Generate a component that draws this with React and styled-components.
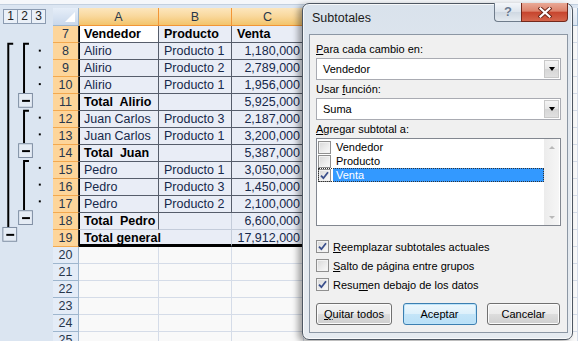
import React from 'react'
import styled, { createGlobalStyle } from 'styled-components'

const GlobalStyle = createGlobalStyle`
  html, body {
    margin: 0;
    padding: 0;
    background: #f9f9f9;
    overflow: hidden;
  }
  body {
    font-family: 'Liberation Sans', Arial, sans-serif;
  }
`

const Screen = styled.div`
  position: relative;
  width: 578px;
  height: 341px;
  overflow: hidden;
  display: flex;
  flex-direction: column;
  background: #dce6f2;
`

const TopStrip = styled.div`
  height: 4px;
  flex: none;
  background: #f5f7fa;
  border-bottom: 1px solid #c3d0df;
`

const Body = styled.div`
  flex: 1;
  display: flex;
  min-height: 0;
`

const OutlinePane = styled.div`
  width: 53px;
  flex: none;
  display: flex;
  flex-direction: column;
  background: #dbe5f1;
`

const LevelBar = styled.div`
  height: 21px;
  box-sizing: border-box;
  padding: 4px 0 0 3px;
  display: flex;
`

const LevelButton = styled.div`
  width: 15px;
  height: 15px;
  box-sizing: border-box;
  border: 1px solid #8b9bb1;
  margin-right: -1px;
  background: #eaf0f8;
  font-size: 12px;
  line-height: 13px;
  text-align: center;
  color: #222;
`

const Sheet = styled.div`
  flex: 1;
  min-width: 0;
  padding-top: 3px;
  background: #dce6f2;
`

const Grid = styled.div`
  display: grid;
  grid-template-columns: 26px 80px 73px 72px 1fr;
  grid-template-rows: 18px;
  grid-auto-rows: 17px;
  font-size: 12.5px;
`

const Corner = styled.div`
  position: relative;
  box-sizing: border-box;
  background: linear-gradient(180deg, #e6eef8, #c9d8ec);
  border-right: 1px solid #9eb6ce;
  border-bottom: 1px solid #9eb6ce;
  &::after {
    content: '';
    position: absolute;
    right: 3px;
    bottom: 3px;
    border-style: solid;
    border-width: 0 0 10px 10px;
    border-color: transparent transparent #ffffff transparent;
  }
`

const ColHead = styled.div`
  box-sizing: border-box;
  text-align: center;
  line-height: 18px;
  color: #27364a;
  background: ${p =>
    p.$selected
      ? 'linear-gradient(180deg, #fce6bd 0%, #f9d99f 45%, #f3c46b 100%)'
      : 'linear-gradient(180deg, #f3f6fb, #dde7f3)'};
  border-right: 1px solid ${p => (p.$selected ? '#f29536' : '#9eb6ce')};
  border-bottom: 1px solid ${p => (p.$selected ? '#f29536' : '#9eb6ce')};
`

const RowHead = styled.div`
  box-sizing: border-box;
  text-align: center;
  line-height: 16px;
  color: #27364a;
  background: ${p => (p.$selected ? '#fdd59a' : '#e4ecf7')};
  border-bottom: 1px solid ${p => (p.$selected ? '#f3a94f' : '#9eb6ce')};
  border-right: 1px solid ${p => (p.$selected ? '#2b2b2b' : '#9eb6ce')};
`

const Cell = styled.div`
  box-sizing: border-box;
  padding: 0 3px 0 5px;
  line-height: 16px;
  white-space: pre;
  overflow: hidden;
  grid-column: ${p => (p.$span ? `span ${p.$span}` : 'auto')};
  text-align: ${p => (p.$num ? 'right' : 'left')};
  font-weight: ${p => (p.$bold ? 700 : 400)};
  color: ${p => (p.$bold ? '#000' : '#16284a')};
  background: ${p => (p.$active ? '#ffffff' : p.$empty ? '#f9f9f9' : '#e9edf6')};
  border-right: 1px solid ${p => (p.$empty ? '#d5dce8' : p.$soft ? '#c4ccda' : '#565d6b')};
  border-bottom: ${p => (p.$thick ? '3px solid #000' : `1px solid ${p.$empty ? '#d5dce8' : p.$softBottom ? '#c4ccda' : '#565d6b'}`)};
  box-shadow: ${p => (p.$edge ? 'inset 1px 0 0 #000' : 'none')};
`

/* ---------- dialog ---------- */

const Dialog = styled.div`
  position: absolute;
  left: 302px;
  top: 3px;
  width: 271px;
  height: 337px;
  box-sizing: border-box;
  border: 1px solid #4e5762;
  border-radius: 7px;
  background: linear-gradient(180deg, #d9e2ec 0%, #e2e8ef 35%, #e6ebf0 100%);
  box-shadow: -4px 2px 6px rgba(0, 0, 0, 0.35), inset 0 0 0 1px rgba(255, 255, 255, 0.75);
  display: flex;
  flex-direction: column;
  font-size: 11px;
  color: #000;
`

const TitleBar = styled.div`
  height: 29px;
  flex: none;
  display: flex;
  justify-content: space-between;
  align-items: flex-start;
`

const Title = styled.div`
  padding: 7px 0 0 9px;
  font-size: 12.5px;
  color: #1b1b1b;
`

const Caption = styled.div`
  display: flex;
  margin: -1px 4px 0 0;
`

const HelpButton = styled.div`
  width: 27px;
  height: 19px;
  box-sizing: border-box;
  border: 1px solid #6f7c8b;
  border-top: none;
  border-right: none;
  border-radius: 0 0 0 4px;
  background: linear-gradient(180deg, #f3f6fa 0%, #dde4ec 50%, #cfd8e2 51%, #e4eaf0 100%);
  text-align: center;
  font-weight: 700;
  font-size: 13px;
  line-height: 18px;
  color: #687990;
  text-shadow: 0 0 1px #fff;
`

const CloseButton = styled.div`
  width: 47px;
  height: 19px;
  box-sizing: border-box;
  border: 1px solid #73291c;
  border-top: none;
  border-radius: 0 0 4px 0;
  background: linear-gradient(180deg, #e9a996 0%, #dd836c 45%, #c7452e 52%, #d4664c 100%);
  display: flex;
  align-items: center;
  justify-content: center;
`

const Client = styled.div`
  flex: 1;
  margin: 1px 4px 6px 6px;
  box-sizing: border-box;
  background: #f0f0f0;
  border: 1px solid #8c97a4;
  padding: 7px 6px 0 6px;
  display: flex;
  flex-direction: column;
`

const Label = styled.div`
  height: 14px;
  line-height: 14px;
  margin-top: ${p => p.$gap || 0}px;
`

const Select = styled.div`
  height: 22px;
  box-sizing: border-box;
  margin-top: 2px;
  border: 1px solid #a9abb2;
  background: #fff;
  display: flex;
  align-items: stretch;
  padding: 1px;
`

const SelectValue = styled.div`
  flex: 1;
  padding-left: 5px;
  line-height: 18px;
`

const SelectArrow = styled.div`
  width: 15px;
  box-sizing: border-box;
  border: 1px solid #c9c9c9;
  background: linear-gradient(180deg, #f4f4f4 0%, #e6e6e6 50%, #d6d6d6 51%, #e0e0e0 100%);
  display: flex;
  align-items: center;
  justify-content: center;
  &::after {
    content: '';
    border-style: solid;
    border-width: 4px 3.5px 0 3.5px;
    border-color: #000 transparent transparent transparent;
  }
`

const ListBox = styled.div`
  height: 88px;
  box-sizing: border-box;
  margin-top: 2px;
  border: 1px solid #828790;
  background: #fff;
  display: flex;
`

const ListItems = styled.div`
  flex: 1;
  padding: 1px 0 0 1px;
`

const ListItem = styled.div`
  height: 14px;
  display: flex;
  align-items: center;
  outline: ${p => (p.$focus ? '1px dotted #333' : 'none')};
  outline-offset: -1px;
`

const ItemText = styled.div`
  flex: 1;
  height: 14px;
  line-height: 14px;
  margin-left: 2px;
  padding-left: 3px;
  background: ${p => (p.$selected ? '#3399ff' : 'transparent')};
  color: ${p => (p.$selected ? '#fff' : '#000')};
`

const ScrollBar = styled.div`
  width: 15px;
  flex: none;
  margin-right: 1px;
  background: linear-gradient(90deg, #ececec, #f6f6f6);
  display: flex;
  flex-direction: column;
  justify-content: space-between;
  align-items: center;
  padding: 7px 0 6px;
  box-sizing: border-box;
`

const ScrollArrow = styled.div`
  border-style: solid;
  border-width: ${p => (p.$down ? '3px 3.5px 0 3.5px' : '0 3.5px 3px 3.5px')};
  border-color: ${p =>
    p.$down ? '#b9b9b9 transparent transparent transparent' : 'transparent transparent #b9b9b9 transparent'};
`

const Box = styled.span`
  width: 13px;
  height: 13px;
  flex: none;
  box-sizing: border-box;
  border: 1px solid #8f8f8f;
  background: linear-gradient(135deg, #d8d8d8, #fbfbfb);
  box-shadow: inset 0 0 0 1px #f2f2f2;
  display: inline-flex;
  align-items: center;
  justify-content: center;
`

const Options = styled.div`
  margin-top: 11px;
  display: flex;
  flex-direction: column;
`

const Option = styled.div`
  height: 19px;
  display: flex;
  align-items: center;
  gap: 4px;
`

const ButtonRow = styled.div`
  margin-top: 9px;
  padding-right: 1px;
  display: flex;
  justify-content: space-between;
`

const Button = styled.div`
  height: 22px;
  width: ${p => p.$w}px;
  box-sizing: border-box;
  border: 1px solid ${p => (p.$primary ? '#3c7fb1' : '#707070')};
  border-radius: 3px;
  background: ${p =>
    p.$primary
      ? 'linear-gradient(180deg, #edf7fd 0%, #dcf0fb 50%, #c4e5f8 51%, #b9e0f7 100%)'
      : 'linear-gradient(180deg, #f3f3f3 0%, #ebebeb 50%, #dddddd 51%, #cfcfcf 100%)'};
  box-shadow: inset 0 0 0 1px ${p => (p.$primary ? '#bde4fa' : '#fbfbfb')};
  text-align: center;
  line-height: 20px;
`

const Check = () => (
  <svg width="9" height="9" viewBox="0 0 9 9">
    <path d="M1 4.6 L3.4 7.2 L8 1.2" stroke="#3a4f8c" strokeWidth="1.8" fill="none" />
  </svg>
)

const CloseGlyph = () => (
  <svg width="14" height="11" viewBox="0 0 14 11">
    <path d="M2.5 1.5 L11.5 9.5 M11.5 1.5 L2.5 9.5" stroke="#6a2417" strokeWidth="4" strokeLinecap="square" />
    <path d="M2.5 1.5 L11.5 9.5 M11.5 1.5 L2.5 9.5" stroke="#ffffff" strokeWidth="2.2" strokeLinecap="square" />
  </svg>
)

const CheckBox = ({ checked }) => <Box>{checked && <Check />}</Box>

/* ---------- outline drawing ---------- */

const rowTop = r => (r - 7) * 17

const Minus = ({ x, r }) => (
  <g>
    <rect x={x + 0.5} y={rowTop(r) + 0.5} width="14" height="14" fill="#e5ecf5" stroke="#7d8ca1" />
    <rect x={x + 4} y={rowTop(r) + 7} width="8" height="2" fill="#000" />
  </g>
)

const OutlineTree = () => {
  const dots = [8, 9, 10, 12, 13, 15, 16, 17]
  return (
    <svg width="53" height="320" viewBox="0 0 53 320">
      <path d="M13 18 H8 V204" stroke="#000" strokeWidth="2" fill="none" />
      <path d="M29 18 H24 V68" stroke="#000" strokeWidth="2" fill="none" />
      <path d="M29 86 H24 V119" stroke="#000" strokeWidth="2" fill="none" />
      <path d="M29 137 H24 V187" stroke="#000" strokeWidth="2" fill="none" />
      {dots.map(r => (
        <rect key={r} x="39" y={rowTop(r) + 7} width="2" height="2" fill="#000" />
      ))}
      <Minus x={18} r={11} />
      <Minus x={18} r={14} />
      <Minus x={18} r={18} />
      <Minus x={2} r={19} />
    </svg>
  )
}

/* ---------- data ---------- */

const rows = [
  { n: 7, a: 'Vendedor', b: 'Producto', c: 'Venta', kind: 'head' },
  { n: 8, a: 'Alirio', b: 'Producto 1', c: '1,180,000' },
  { n: 9, a: 'Alirio', b: 'Producto 2', c: '2,789,000' },
  { n: 10, a: 'Alirio', b: 'Producto 1', c: '1,956,000' },
  { n: 11, a: 'Total  Alirio', b: '', c: '5,925,000', kind: 'total' },
  { n: 12, a: 'Juan Carlos', b: 'Producto 3', c: '2,187,000' },
  { n: 13, a: 'Juan Carlos', b: 'Producto 1', c: '3,200,000' },
  { n: 14, a: 'Total  Juan', b: '', c: '5,387,000', kind: 'total' },
  { n: 15, a: 'Pedro', b: 'Producto 1', c: '3,050,000' },
  { n: 16, a: 'Pedro', b: 'Producto 3', c: '1,450,000' },
  { n: 17, a: 'Pedro', b: 'Producto 2', c: '2,100,000' },
  { n: 18, a: 'Total  Pedro', b: '', c: '6,600,000', kind: 'total', soft: true },
  { n: 19, a: 'Total general', c: '17,912,000', kind: 'grand' },
]

const emptyRows = [20, 21, 22, 23, 24, 25]

const DataRow = ({ row }) => {
  const bold = row.kind === 'head' || row.kind === 'total' || row.kind === 'grand'
  const head = row.kind === 'head'
  if (row.kind === 'grand') {
    return (
      <>
        <RowHead $selected>{row.n}</RowHead>
        <Cell $span={2} $bold $edge $thick $soft>{row.a}</Cell>
        <Cell $num $thick>{row.c}</Cell>
        <Cell $empty />
      </>
    )
  }
  return (
    <>
      <RowHead $selected>{row.n}</RowHead>
      <Cell $bold={bold} $edge $active={head} $softBottom={row.soft}>{row.a}</Cell>
      <Cell $bold={head} $softBottom={row.soft} $soft={row.soft}>{row.b}</Cell>
      <Cell $bold={head} $num={!head} $softBottom={row.soft}>{row.c}</Cell>
      <Cell $empty />
    </>
  )
}

export default function App() {
  return (
    <Screen>
      <GlobalStyle />
      <TopStrip />
      <Body>
        <OutlinePane>
          <LevelBar>
            <LevelButton>1</LevelButton>
            <LevelButton>2</LevelButton>
            <LevelButton>3</LevelButton>
          </LevelBar>
          <OutlineTree />
        </OutlinePane>
        <Sheet>
          <Grid>
            <Corner />
            <ColHead $selected>A</ColHead>
            <ColHead $selected>B</ColHead>
            <ColHead $selected>C</ColHead>
            <ColHead>D</ColHead>
            {rows.map(row => (
              <DataRow key={row.n} row={row} />
            ))}
            {emptyRows.map(n => (
              <React.Fragment key={n}>
                <RowHead>{n}</RowHead>
                <Cell $empty />
                <Cell $empty />
                <Cell $empty />
                <Cell $empty />
              </React.Fragment>
            ))}
          </Grid>
        </Sheet>
      </Body>

      <Dialog>
        <TitleBar>
          <Title>Subtotales</Title>
          <Caption>
            <HelpButton>?</HelpButton>
            <CloseButton>
              <CloseGlyph />
            </CloseButton>
          </Caption>
        </TitleBar>
        <Client>
          <Label>
            <u>P</u>ara cada cambio en:
          </Label>
          <Select>
            <SelectValue>Vendedor</SelectValue>
            <SelectArrow />
          </Select>
          <Label $gap={2}>
            Usar <u>f</u>unción:
          </Label>
          <Select>
            <SelectValue>Suma</SelectValue>
            <SelectArrow />
          </Select>
          <Label $gap={2}>
            <u>A</u>gregar subtotal a:
          </Label>
          <ListBox>
            <ListItems>
              <ListItem>
                <CheckBox />
                <ItemText>Vendedor</ItemText>
              </ListItem>
              <ListItem>
                <CheckBox />
                <ItemText>Producto</ItemText>
              </ListItem>
              <ListItem $focus>
                <CheckBox checked />
                <ItemText $selected>Venta</ItemText>
              </ListItem>
            </ListItems>
            <ScrollBar>
              <ScrollArrow />
              <ScrollArrow $down />
            </ScrollBar>
          </ListBox>
          <Options>
            <Option>
              <CheckBox checked />
              <span>
                <u>R</u>eemplazar subtotales actuales
              </span>
            </Option>
            <Option>
              <CheckBox />
              <span>
                <u>S</u>alto de página entre grupos
              </span>
            </Option>
            <Option>
              <CheckBox checked />
              <span>
                Resu<u>m</u>en debajo de los datos
              </span>
            </Option>
          </Options>
          <ButtonRow>
            <Button $w={76}>
              <u>Q</u>uitar todos
            </Button>
            <Button $w={74} $primary>
              Aceptar
            </Button>
            <Button $w={73}>Cancelar</Button>
          </ButtonRow>
        </Client>
      </Dialog>
    </Screen>
  )
}
